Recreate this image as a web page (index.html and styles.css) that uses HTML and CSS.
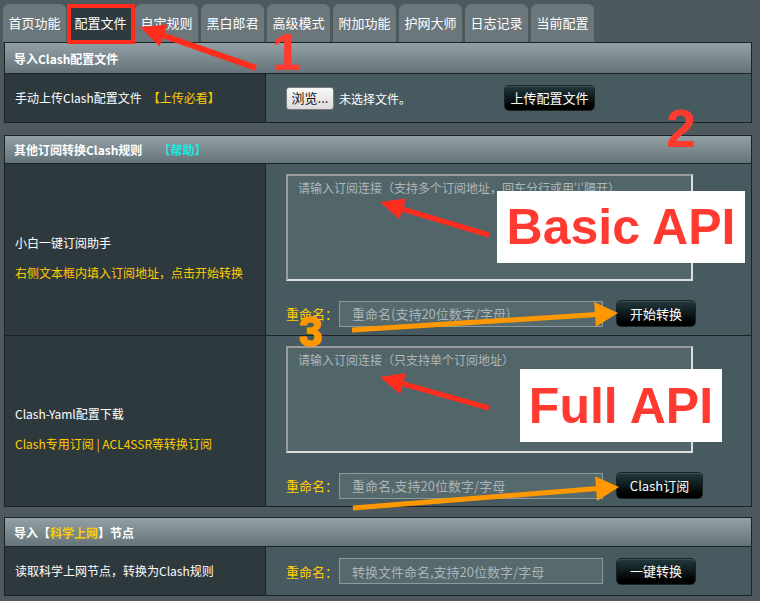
FILE: index.html
```html
<!DOCTYPE html>
<html lang="zh-CN">
<head>
<meta charset="utf-8">
<title>配置文件</title>
<link rel="stylesheet" href="styles.css">
</head>
<body>
<div class="page">
  <nav class="tabs">
    <div class="tab">首页功能</div>
    <div class="tab active">配置文件</div>
    <div class="tab">自定规则</div>
    <div class="tab">黑白郎君</div>
    <div class="tab">高级模式</div>
    <div class="tab">附加功能</div>
    <div class="tab">护网大师</div>
    <div class="tab">日志记录</div>
    <div class="tab">当前配置</div>
  </nav>

  <section class="panel panel-first">
    <div class="panel-head head-tall">导入Clash配置文件</div>
    <div class="row row-short">
      <div class="cell-label">
        <p class="one-line">手动上传Clash配置文件<span class="yellow gap">【上传必看】</span></p>
      </div>
      <div class="cell-body body-inline">
        <div class="file-box">
          <button class="browse">浏览...</button>
          <span class="file-name">未选择文件。</span>
        </div>
        <button class="btn btn-upload">上传配置文件</button>
      </div>
    </div>
  </section>

  <section class="panel panel-second">
    <div class="panel-head head-mid">其他订阅转换Clash规则<span class="cyan help">【帮助】</span></div>
    <div class="row row-tall">
      <div class="cell-label stack">
        <p>小白一键订阅助手</p>
        <p class="yellow">右侧文本框内填入订阅地址，点击开始转换</p>
      </div>
      <div class="cell-body body-stack">
        <textarea class="links" placeholder="请输入订阅连接（支持多个订阅地址，回车分行或用'|'隔开）"></textarea>
        <div class="rename">
          <span class="rename-label">重命名：</span>
          <input class="rename-input" type="text" placeholder="重命名(支持20位数字/字母)">
          <button class="btn btn-small">开始转换</button>
        </div>
      </div>
    </div>
    <div class="row row-tall">
      <div class="cell-label stack">
        <p>Clash-Yaml配置下载</p>
        <p class="yellow">Clash专用订阅 | ACL4SSR等转换订阅</p>
      </div>
      <div class="cell-body body-stack">
        <textarea class="links" placeholder="请输入订阅连接（只支持单个订阅地址）"></textarea>
        <div class="rename">
          <span class="rename-label">重命名：</span>
          <input class="rename-input" type="text" placeholder="重命名,支持20位数字/字母">
          <button class="btn btn-wide">Clash订阅</button>
        </div>
      </div>
    </div>
  </section>

  <section class="panel panel-third">
    <div class="panel-head head-low">导入【<span class="yellow">科学上网</span> 】节点</div>
    <div class="row row-short">
      <div class="cell-label">
        <p class="one-line">读取科学上网节点，转换为Clash规则</p>
      </div>
      <div class="cell-body body-inline">
        <div class="rename">
          <span class="rename-label">重命名：</span>
          <input class="rename-input" type="text" placeholder="转换文件命名,支持20位数字/字母">
          <button class="btn btn-small">一键转换</button>
        </div>
      </div>
    </div>
  </section>
</div>

<div class="mark-box"></div>
<div class="api-label api-basic">Basic API</div>
<div class="api-label api-full">Full API</div>

<svg class="arrows" width="760" height="601" viewBox="0 0 760 601" aria-hidden="true">
  <g class="red">
    <line x1="256" y1="68" x2="162" y2="35" stroke-width="6"/>
    <polygon points="140,27 167.5,24.5 159.5,46.5"/>
    <line x1="489" y1="235" x2="402" y2="209" stroke-width="5"/>
    <polygon points="380,202 406,198.5 399.5,219.5"/>
    <line x1="489" y1="408" x2="402" y2="383.5" stroke-width="5"/>
    <polygon points="380,377 406,373 400,394"/>
  </g>
  <g class="orange">
    <line x1="352" y1="330" x2="597" y2="314.5" stroke-width="5"/>
    <polygon points="618,313 595.8,326.8 594.2,302"/>
    <line x1="353" y1="508" x2="598" y2="488.5" stroke-width="5"/>
    <polygon points="619,487 597,501 595.2,476.5"/>
  </g>
  <text class="num num-red" x="272" y="70" font-size="52">1</text>
  <text class="num num-red" x="666" y="147" font-size="54">2</text>
  <text class="num num-orange" x="299" y="346" font-size="42">3</text>
</svg>
</body>
</html>
```
FILE: styles.css
```css
* { box-sizing: border-box; }

html, body {
  margin: 0;
  padding: 0;
}

body {
  position: relative;
  width: 760px;
  height: 601px;
  overflow: hidden;
  background: #4d595d;
  font-family: "Noto Sans CJK SC", "Liberation Sans", sans-serif;
  font-size: 12px;
  color: #ffffff;
}

p { margin: 0; }

.page {
  padding: 0 8px 0 4px;
}

/* ---------- tabs ---------- */
.tabs {
  display: flex;
  gap: 3px;
  height: 42px;
  padding-top: 4px;
  margin-left: -1px;
}

.tab {
  width: 63px;
  height: 38px;
  background: #6b777b;
  border-radius: 6px 6px 0 0;
  color: #ffffff;
  font-size: 13px;
  line-height: 38px;
  text-align: center;
}

.tab.active {
  background: #2e3a3e;
}

/* ---------- panels ---------- */
.panel {
  border: 1px solid #1c2326;
}

.panel-second { margin-top: 12px; }
.panel-third { margin-top: 10px; }

.panel-head {
  display: flex;
  align-items: center;
  padding-left: 9px;
  background: linear-gradient(#93a1a6, #65747a);
  border-bottom: 1px solid #1c2326;
  font-weight: 700;
  font-size: 12px;
  color: #ffffff;
}

.head-tall { height: 31px; }
.head-mid { height: 28px; }
.head-low { height: 29px; }

.help { margin-left: 16px; }

.row {
  display: grid;
  grid-template-columns: 261px 1fr;
}

.row + .row {
  border-top: 1px solid #1c2326;
}

.row-short { height: 48px; }
.row-tall { height: 171px; }

.cell-label {
  display: flex;
  flex-direction: column;
  justify-content: center;
  padding-left: 10px;
  background: #2e393e;
  border-right: 1px solid #1c2326;
  line-height: 16px;
}

.cell-label.stack {
  gap: 14px;
  padding-top: 16px;
}

.gap { margin-left: 6px; }

.cell-body {
  background: #475a5f;
  padding-left: 20px;
}

.body-inline {
  display: flex;
  align-items: center;
}

.body-stack {
  display: flex;
  flex-direction: column;
  gap: 19px;
  padding-top: 10px;
}

.yellow { color: #ffcc00; }
.cyan { color: #1de9e2; }

/* ---------- file chooser ---------- */
.file-box {
  display: flex;
  align-items: center;
  width: 218px;
  gap: 5px;
}

.browse {
  width: 48px;
  height: 23px;
  padding: 0;
  border: 1px solid #7c7c7c;
  border-radius: 3px;
  background: linear-gradient(#f8f8f8, #dcdcdc);
  color: #111111;
  font-family: inherit;
  font-size: 13px;
  line-height: 20px;
}

.file-name {
  font-size: 12px;
  color: #ffffff;
}

/* ---------- buttons ---------- */
.btn {
  height: 27px;
  padding: 0;
  border: 1px solid #1a2224;
  border-radius: 5px;
  background: linear-gradient(#233a3e, #000000 85%);
  box-shadow: inset 0 1px 0 rgba(120, 170, 170, 0.25);
  color: #ffffff;
  font-family: inherit;
  font-size: 13px;
  line-height: 24px;
  text-align: center;
}

.btn-upload { width: 91px; height: 26px; }
.btn-small { width: 80px; margin-left: 13px; }
.btn-wide { width: 87px; margin-left: 13px; }

/* ---------- text inputs ---------- */
.links {
  display: block;
  width: 407px;
  height: 107px;
  margin: 0;
  padding: 4px 10px;
  resize: none;
  border-style: solid;
  border-width: 2px;
  border-color: #9a9c9c #dedede #dedede #9a9c9c;
  background: #526569;
  color: #ffffff;
  font-family: inherit;
  font-size: 12px;
  line-height: 16px;
  outline: none;
}

.links::placeholder {
  color: #aeb8ba;
}

.rename {
  display: flex;
  align-items: center;
  height: 27px;
}

.rename-label {
  width: 53px;
  font-size: 13px;
  color: #ffcc00;
}

.rename-input {
  width: 264px;
  height: 26px;
  margin: 0;
  padding: 0 0 0 12px;
  border: 1px solid #8a9b9f;
  background: #56696d;
  color: #ffffff;
  font-family: inherit;
  font-size: 13px;
  outline: none;
}

.rename-input::placeholder {
  color: #a9b4b7;
}

/* ---------- annotations (overlay) ---------- */
.mark-box {
  position: absolute;
  left: 67px;
  top: 4px;
  width: 68px;
  height: 40px;
  border: 4px solid #ff2b1c;
}

.api-label {
  position: absolute;
  display: flex;
  align-items: center;
  justify-content: center;
  background: #ffffff;
  color: #ff3a30;
  font-family: "Liberation Sans", Arial, sans-serif;
  font-weight: 700;
  font-size: 50px;
  line-height: 1;
}

.api-basic {
  left: 497px;
  top: 191px;
  width: 248px;
  height: 72px;
}

.api-full {
  left: 520px;
  top: 369px;
  width: 202px;
  height: 73px;
}

.arrows {
  position: absolute;
  left: 0;
  top: 0;
  pointer-events: none;
}

.red line { stroke: #ff2d1e; }
.red polygon { fill: #ff2d1e; }
.orange line { stroke: #ff9800; }
.orange polygon { fill: #ff9800; }

.num {
  font-family: "Liberation Sans", Arial, sans-serif;
  font-weight: 700;
}

.num-red { fill: #ff3b30; }
.num-orange { fill: #ff9800; stroke: #ff9800; stroke-width: 1.5px; }
```
